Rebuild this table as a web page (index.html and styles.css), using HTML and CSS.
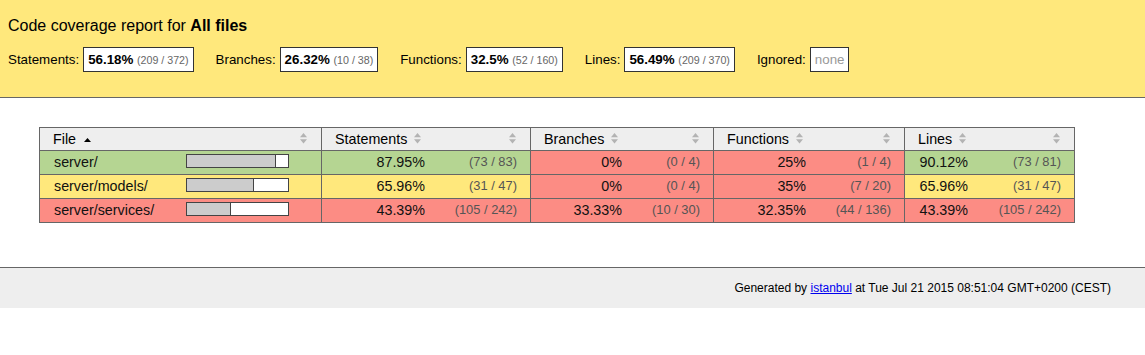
FILE: index.html
```html
<!DOCTYPE html>
<html lang="en">
<head>
<meta charset="utf-8">
<title>Code coverage report for All files</title>
<link rel="stylesheet" href="styles.css">
</head>
<body>
<header class="header medium">
  <h1 class="title">Code coverage report for <strong>All files</strong></h1>
  <div class="metrics">
    <div class="metric-group"><span class="metric-label">Statements:</span><span class="metric"><strong>56.18%</strong> <small>(209 / 372)</small></span></div>
    <div class="metric-group"><span class="metric-label">Branches:</span><span class="metric"><strong>26.32%</strong> <small>(10 / 38)</small></span></div>
    <div class="metric-group"><span class="metric-label">Functions:</span><span class="metric"><strong>32.5%</strong> <small>(52 / 160)</small></span></div>
    <div class="metric-group"><span class="metric-label">Lines:</span><span class="metric"><strong>56.49%</strong> <small>(209 / 370)</small></span></div>
    <div class="metric-group"><span class="metric-label">Ignored:</span><span class="metric"><span class="ignore-none">none</span></span></div>
  </div>
</header>

<main class="body">
  <div class="coverage">
    <div class="row head">
      <div class="th th-file"><span class="label">File</span><svg class="sorted" width="7" height="4" viewBox="0 0 7 4"><polygon points="0,4 3.5,0 7,4"/></svg><svg class="sort-end" width="7" height="11" viewBox="0 0 7 11"><polygon points="0,4.2 3.5,0 7,4.2"/><polygon points="0,6.3 7,6.3 3.5,10.5"/></svg></div>
      <div class="th th-group"><span class="label">Statements</span><svg class="sort" width="7" height="11" viewBox="0 0 7 11"><polygon points="0,4.2 3.5,0 7,4.2"/><polygon points="0,6.3 7,6.3 3.5,10.5"/></svg><svg class="sort-end" width="7" height="11" viewBox="0 0 7 11"><polygon points="0,4.2 3.5,0 7,4.2"/><polygon points="0,6.3 7,6.3 3.5,10.5"/></svg></div>
      <div class="th th-group"><span class="label">Branches</span><svg class="sort" width="7" height="11" viewBox="0 0 7 11"><polygon points="0,4.2 3.5,0 7,4.2"/><polygon points="0,6.3 7,6.3 3.5,10.5"/></svg><svg class="sort-end" width="7" height="11" viewBox="0 0 7 11"><polygon points="0,4.2 3.5,0 7,4.2"/><polygon points="0,6.3 7,6.3 3.5,10.5"/></svg></div>
      <div class="th th-group"><span class="label">Functions</span><svg class="sort" width="7" height="11" viewBox="0 0 7 11"><polygon points="0,4.2 3.5,0 7,4.2"/><polygon points="0,6.3 7,6.3 3.5,10.5"/></svg><svg class="sort-end" width="7" height="11" viewBox="0 0 7 11"><polygon points="0,4.2 3.5,0 7,4.2"/><polygon points="0,6.3 7,6.3 3.5,10.5"/></svg></div>
      <div class="th th-group"><span class="label">Lines</span><svg class="sort" width="7" height="11" viewBox="0 0 7 11"><polygon points="0,4.2 3.5,0 7,4.2"/><polygon points="0,6.3 7,6.3 3.5,10.5"/></svg><svg class="sort-end" width="7" height="11" viewBox="0 0 7 11"><polygon points="0,4.2 3.5,0 7,4.2"/><polygon points="0,6.3 7,6.3 3.5,10.5"/></svg></div>
    </div>

    <div class="row">
      <div class="td file high">server/</div>
      <div class="td pic high"><span class="bar"><span class="cover-fill" style="width:88px"></span><span class="cover-empty" style="width:12px"></span></span></div>
      <div class="td pct high">87.95%</div>
      <div class="td abs high">(73 / 83)</div>
      <div class="td pct low">0%</div>
      <div class="td abs low">(0 / 4)</div>
      <div class="td pct low">25%</div>
      <div class="td abs low">(1 / 4)</div>
      <div class="td pct high">90.12%</div>
      <div class="td abs high">(73 / 81)</div>
    </div>

    <div class="row">
      <div class="td file medium">server/models/</div>
      <div class="td pic medium"><span class="bar"><span class="cover-fill" style="width:66px"></span><span class="cover-empty" style="width:34px"></span></span></div>
      <div class="td pct medium">65.96%</div>
      <div class="td abs medium">(31 / 47)</div>
      <div class="td pct low">0%</div>
      <div class="td abs low">(0 / 4)</div>
      <div class="td pct low">35%</div>
      <div class="td abs low">(7 / 20)</div>
      <div class="td pct medium">65.96%</div>
      <div class="td abs medium">(31 / 47)</div>
    </div>

    <div class="row">
      <div class="td file low">server/services/</div>
      <div class="td pic low"><span class="bar"><span class="cover-fill" style="width:43px"></span><span class="cover-empty" style="width:57px"></span></span></div>
      <div class="td pct low">43.39%</div>
      <div class="td abs low">(105 / 242)</div>
      <div class="td pct low">33.33%</div>
      <div class="td abs low">(10 / 30)</div>
      <div class="td pct low">32.35%</div>
      <div class="td abs low">(44 / 136)</div>
      <div class="td pct low">43.39%</div>
      <div class="td abs low">(105 / 242)</div>
    </div>
  </div>
</main>

<footer class="footer">
  <div class="meta">Generated by <a href="#">istanbul</a> at Tue Jul 21 2015 08:51:04 GMT+0200 (CEST)</div>
</footer>
</body>
</html>
```

FILE: styles.css
```css
html, body {
  margin: 0;
  padding: 0;
}

body {
  font-family: "Liberation Sans", Arial, Helvetica, sans-serif;
  font-size: 13.33px;
  color: #000;
  background: #fff;
}

.high { background: #b5d592; }
.medium { background: #ffe87c; }
.low { background: #fc8c84; }

/* header */
.header {
  padding: 17px 8px 25px;
  border-bottom: 1px solid #666;
}

.title {
  margin: 0 0 12px;
  font-size: 16px;
  line-height: 18px;
  font-weight: normal;
}

.title strong {
  font-weight: bold;
}

.metrics {
  display: flex;
  align-items: center;
  gap: 22px;
  height: 25px;
}

.metric-group {
  display: flex;
  align-items: center;
  gap: 4px;
  white-space: nowrap;
}

.metric {
  display: inline-block;
  box-sizing: border-box;
  height: 25px;
  padding: 4px;
  border: 1px solid #333;
  background: #fff;
  line-height: 15px;
}

.metric strong {
  font-weight: bold;
}

.metric small {
  font-size: 10.67px;
  color: #666;
}

.ignore-none {
  color: #999;
  font-weight: normal;
}

/* table */
.body {
  padding: 29px 0 0 39px;
}

.coverage {
  display: inline-block;
  border: 1px solid #666;
  font-size: 14.3px;
  color: #111;
}

.row {
  display: grid;
  grid-template-columns: 136px 145px 117px 92px 105px 78px 106px 85px 77px 93px;
  height: 24px;
  box-sizing: border-box;
  border-top: 1px solid #666;
}

.row.head {
  height: 22px;
  border-top: none;
  background: #eee;
}

.th {
  display: flex;
  align-items: center;
  box-sizing: border-box;
  padding: 0 14px 0 13px;
  color: #000;
  white-space: nowrap;
}

.th-file {
  grid-column: span 2;
}

.th-group {
  grid-column: span 2;
  border-left: 1px solid #666;
}

.th .label {
  line-height: 16px;
}

.th .sort,
.th .sort-end {
  fill: #b3b3b3;
  flex: none;
}

.th .sort {
  margin-left: 7px;
  margin-top: -1px;
}

.th .sorted {
  fill: #000;
  margin-left: 8px;
  margin-top: 2px;
  flex: none;
}

.th .sort-end {
  margin-left: auto;
  margin-top: -1px;
}

.td {
  box-sizing: border-box;
  padding-top: 3px;
  line-height: 16px;
  white-space: nowrap;
}

.td.file {
  padding-left: 14px;
}

.td.pic {
  padding-left: 10px;
  padding-top: 3px;
}

.td.pct {
  text-align: right;
  padding-right: 13px;
  border-left: 1px solid #666;
}

.row .td.pct:nth-child(5),
.row .td.pct:nth-child(7),
.row .td.pct:nth-child(9),
.row .td.pct:nth-child(3) {
  border-left: 1px solid #666;
}

.td.abs {
  text-align: right;
  padding-right: 13px;
  font-size: 12.9px;
  color: #555;
}

.bar {
  display: flex;
  height: 14px;
}

.cover-fill,
.cover-empty {
  display: block;
  height: 12px;
  border: 1px solid #444;
}

.cover-fill {
  background: #ccc;
}

.cover-empty {
  background: #fff;
  border-left: none;
}

/* footer */
.footer {
  margin-top: 44px;
  border-top: 1px solid #666;
  background: #eee;
  padding: 13px 34px 13px 13px;
}

.meta {
  font-size: 12px;
  line-height: 14px;
  text-align: right;
}

.meta a {
  color: #00e;
  text-decoration: underline;
}
```
